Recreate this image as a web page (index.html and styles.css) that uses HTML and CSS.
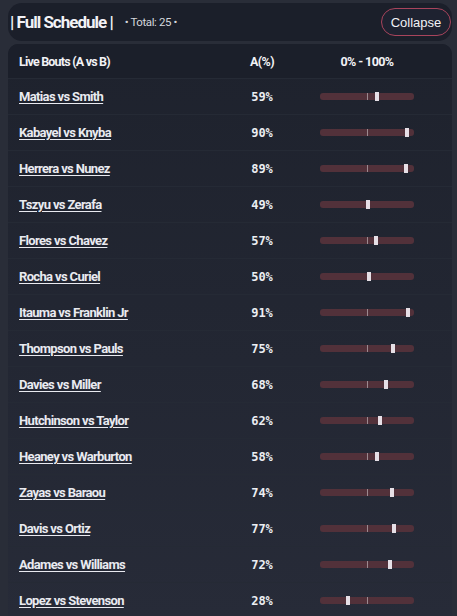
FILE: index.html
```html
<!DOCTYPE html>
<html>
<head>
<meta charset="utf-8">
<link rel="stylesheet" href="styles.css">
</head>
<body>
<div class="wrap">
  <div class="topbar">
    <div class="title">| Full Schedule |</div>
    <div class="total">• Total: 25 •</div>
    <button class="collapse">Collapse</button>
  </div>
  <div class="table">
    <div class="row head">
      <div class="c-name">Live Bouts (A vs B)</div>
      <div class="c-pct">A(%)</div>
      <div class="c-bar">0% - 100%</div>
    </div>
    <div class="row"><a class="c-name">Matias vs Smith</a><div class="c-pct">59%</div><div class="c-bar"><div class="bar"><span class="mid"></span><span class="mark" style="left:59%"></span></div></div></div>
    <div class="row"><a class="c-name">Kabayel vs Knyba</a><div class="c-pct">90%</div><div class="c-bar"><div class="bar"><span class="mid"></span><span class="mark" style="left:90%"></span></div></div></div>
    <div class="row"><a class="c-name">Herrera vs Nunez</a><div class="c-pct">89%</div><div class="c-bar"><div class="bar"><span class="mid"></span><span class="mark" style="left:89%"></span></div></div></div>
    <div class="row"><a class="c-name">Tszyu vs Zerafa</a><div class="c-pct">49%</div><div class="c-bar"><div class="bar"><span class="mid"></span><span class="mark" style="left:49%"></span></div></div></div>
    <div class="row"><a class="c-name">Flores vs Chavez</a><div class="c-pct">57%</div><div class="c-bar"><div class="bar"><span class="mid"></span><span class="mark" style="left:57%"></span></div></div></div>
    <div class="row"><a class="c-name">Rocha vs Curiel</a><div class="c-pct">50%</div><div class="c-bar"><div class="bar"><span class="mid"></span><span class="mark" style="left:50%"></span></div></div></div>
    <div class="row"><a class="c-name">Itauma vs Franklin Jr</a><div class="c-pct">91%</div><div class="c-bar"><div class="bar"><span class="mid"></span><span class="mark" style="left:91%"></span></div></div></div>
    <div class="row"><a class="c-name">Thompson vs Pauls</a><div class="c-pct">75%</div><div class="c-bar"><div class="bar"><span class="mid"></span><span class="mark" style="left:75%"></span></div></div></div>
    <div class="row"><a class="c-name">Davies vs Miller</a><div class="c-pct">68%</div><div class="c-bar"><div class="bar"><span class="mid"></span><span class="mark" style="left:68%"></span></div></div></div>
    <div class="row"><a class="c-name">Hutchinson vs Taylor</a><div class="c-pct">62%</div><div class="c-bar"><div class="bar"><span class="mid"></span><span class="mark" style="left:62%"></span></div></div></div>
    <div class="row"><a class="c-name">Heaney vs Warburton</a><div class="c-pct">58%</div><div class="c-bar"><div class="bar"><span class="mid"></span><span class="mark" style="left:58%"></span></div></div></div>
    <div class="row"><a class="c-name">Zayas vs Baraou</a><div class="c-pct">74%</div><div class="c-bar"><div class="bar"><span class="mid"></span><span class="mark" style="left:74%"></span></div></div></div>
    <div class="row"><a class="c-name">Davis vs Ortiz</a><div class="c-pct">77%</div><div class="c-bar"><div class="bar"><span class="mid"></span><span class="mark" style="left:77%"></span></div></div></div>
    <div class="row"><a class="c-name">Adames vs Williams</a><div class="c-pct">72%</div><div class="c-bar"><div class="bar"><span class="mid"></span><span class="mark" style="left:72%"></span></div></div></div>
    <div class="row"><a class="c-name">Lopez vs Stevenson</a><div class="c-pct">28%</div><div class="c-bar"><div class="bar"><span class="mid"></span><span class="mark" style="left:28%"></span></div></div></div>
  </div>
</div>
</body>
</html>
```

FILE: styles.css
```css
html, body {
  margin: 0;
  padding: 0;
  height: 616px;
  overflow: hidden;
  background: #292d38;
}
.wrap {
  margin: 0 5px 0 8px;
  padding-top: 3px;
}
.topbar {
  display: flex;
  align-items: center;
  height: 38px;
  background: #1b1f2a;
  border-radius: 14px;
  padding: 0 1px 0 2px;
  box-sizing: border-box;
}
.title {
  font-family: "Roboto", sans-serif;
  font-weight: bold;
  font-size: 17px;
  color: #f2f2f6;
  letter-spacing: -1px;
}
.total {
  font-family: "Roboto", sans-serif;
  font-size: 11.5px;
  color: #d4d6dc;
  margin-left: 12px;
  letter-spacing: -0.4px;
}
.collapse {
  margin-left: auto;
  height: 28px;
  width: 70px;
  border-radius: 14px;
  border: 1px solid #a8445c;
  background: #1e2230;
  color: #f2f2f6;
  font-family: "Liberation Sans", Arial, sans-serif;
  font-size: 13px;
  padding: 0;
}
.table {
  margin-top: 3px;
  background: linear-gradient(#1e222d, #272b38);
  border-radius: 10px 10px 0 0;
  overflow: hidden;
}
.row {
  display: flex;
  align-items: center;
  height: 36px;
  border-top: 1px solid #252a35;
  box-sizing: border-box;
  padding-left: 11px;
}
.row.head {
  height: 34px;
  border-top: none;
  background: #1b1f2a;
}
.c-name {
  width: 199px;
  font-family: "Roboto", sans-serif;
  font-weight: bold;
  font-size: 13px;
  letter-spacing: -0.65px;
  color: #e9eaf0;
  text-decoration: underline;
  text-underline-offset: 2px;
}
.head .c-name {
  text-decoration: none;
  font-size: 12.5px;
  letter-spacing: -0.8px;
  color: #f2f2f6;
}
.c-pct {
  width: 86px;
  text-align: center;
  font-family: "DejaVu Sans Mono", monospace;
  font-weight: bold;
  font-size: 12px;
  color: #eceef2;
  padding-left: 1px;
}
.head .c-pct, .head .c-bar {
  font-family: "Roboto", sans-serif;
  font-weight: bold;
  font-size: 12.5px;
  letter-spacing: -0.6px;
  color: #f2f2f6;
}
.c-bar {
  width: 96px;
  padding-left: 14px;
  display: flex;
  justify-content: center;
}
.bar {
  position: relative;
  width: 94px;
  height: 7px;
  border-radius: 3px;
  background: #52313a;
}
.mid {
  position: absolute;
  left: 47px;
  top: 0;
  width: 1px;
  height: 7px;
  background: #9c8a90;
}
.mark {
  position: absolute;
  top: -1px;
  width: 4px;
  height: 9px;
  background: #e6dfe6;
}
```
